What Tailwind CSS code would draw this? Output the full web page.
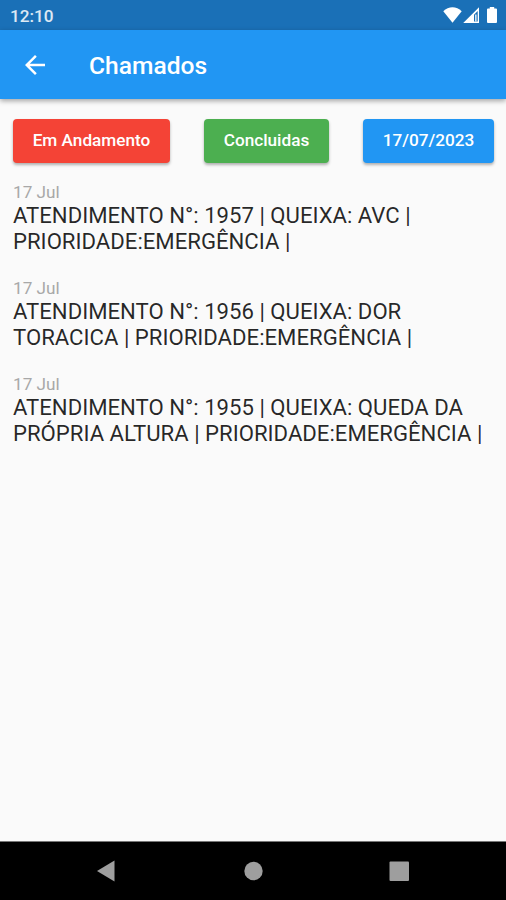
<!DOCTYPE html>
<html lang="pt-BR">
<head>
    <meta charset="UTF-8">
    <meta name="viewport" content="width=device-width, initial-scale=1.0">
    <title>Chamados</title>
    <script src="https://cdn.jsdelivr.net/npm/@tailwindcss/browser@4"></script>
</head>
<body class="bg-[#fafafa] h-screen flex flex-col overflow-hidden font-['Roboto',sans-serif]">

    <!-- Status Bar -->
    <div class="h-[30px] shrink-0 bg-[#1a70b7] flex items-center justify-between pl-[10px] pr-2 text-white">
        <span class="text-[17.2px] leading-5 font-medium text-white/85 pt-[2px]">12:10</span>
        <svg class="w-[56px] h-[18px]" viewBox="0 0 56 18" fill="#fff">
            <path d="M1.300 5.200C6.500 0 14.500 0 19.700 5.200L10.500 16.800z"/>
            <path fill-rule="evenodd" d="M21.200 17L37 1.200V17zM32 8.700V15.500H35.700V5z"/>
            <path d="M33.200 8.500h1.300v7h-1.300z"/>
            <path d="M47.800 1h4.400v1.600H54q1 0 1 1V16q0 1-1 1H46q-1 0-1-1V3.600q0-1 1-1h1.800z"/>
        </svg>
    </div>

    <!-- App Bar -->
    <header class="h-[69px] shrink-0 bg-[#2196f3] flex items-center pl-5 shadow-[0_2px_5px_rgba(0,0,0,0.35)]">
        <button class="w-[30px] h-[30px]">
            <svg class="w-[30px] h-[30px]" viewBox="0 0 24 24" fill="#fff">
                <path d="M20 11H7.830l5.590-5.590L12 4l-8 8 8 8 1.410-1.410L7.830 13H20v-2z"/>
            </svg>
        </button>
        <h1 class="ml-[39px] text-[24.600px] leading-7 font-medium text-white pt-[2px]">Chamados</h1>
    </header>

    <main class="grow pl-[13px] pr-3 pt-5">
        <!-- Filters -->
        <div class="flex justify-between h-[44px] text-[17.200px] font-medium text-white">
            <button class="w-[157px] rounded-[4px] bg-[#f44336] shadow-[0_2px_3px_rgba(0,0,0,0.3)]">Em Andamento</button>
            <button class="w-[125px] rounded-[4px] bg-[#4caf50] shadow-[0_2px_3px_rgba(0,0,0,0.3)]">Concluidas</button>
            <button class="w-[131px] rounded-[4px] bg-[#2196f3] shadow-[0_2px_3px_rgba(0,0,0,0.3)]">17/07/2023</button>
        </div>

        <!-- Ticket List -->
        <ul class="pt-[19px] flex flex-col gap-6 text-[22.150px] leading-[26px] text-black/85 whitespace-nowrap">
            <li>
                <p class="text-[17.200px] leading-5 text-[#a8a8a8]">17 Jul</p>
                <p>ATENDIMENTO N°: 1957 | QUEIXA: AVC |<br>PRIORIDADE:EMERGÊNCIA |</p>
            </li>
            <li>
                <p class="text-[17.200px] leading-5 text-[#a8a8a8]">17 Jul</p>
                <p>ATENDIMENTO N°: 1956 | QUEIXA: DOR<br>TORACICA | PRIORIDADE:EMERGÊNCIA |</p>
            </li>
            <li>
                <p class="text-[17.200px] leading-5 text-[#a8a8a8]">17 Jul</p>
                <p>ATENDIMENTO N°: 1955 | QUEIXA: QUEDA DA<br>PRÓPRIA ALTURA | PRIORIDADE:EMERGÊNCIA |</p>
            </li>
        </ul>
    </main>

    <!-- Navigation Buttons -->
    <nav class="h-[59px] shrink-0 bg-black border-t border-[#777]">
        <svg class="w-[506px] h-[58px]" viewBox="0 0 506 58" fill="#9e9e9e">
            <path d="M97 29L114.500 18.500V39.500z"/>
            <circle cx="253.500" cy="29" r="9.200"/>
            <rect x="389.500" y="19.500" width="19.500" height="19.500" rx="1"/>
        </svg>
    </nav>
</body>
</html>
